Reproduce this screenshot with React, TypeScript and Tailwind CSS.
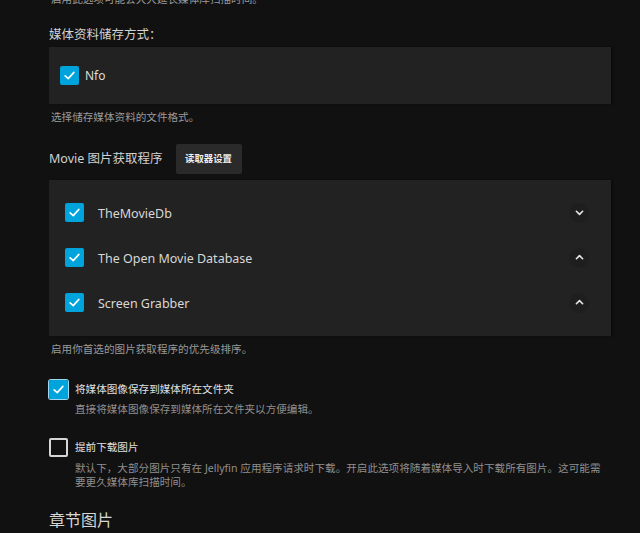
import React from 'react';

const FONT = { fontFamily: '"Noto Sans", "Noto Sans CJK SC", sans-serif' };

const PROVIDERS = [
  { name: 'TheMovieDb', dir: 'down' },
  { name: 'The Open Movie Database', dir: 'up' },
  { name: 'Screen Grabber', dir: 'up' },
];

function Check({ checked, size = 'w-[19px] h-[19px]' }: { checked: boolean; size?: string }) {
  if (!checked) {
    return <span className={`${size} shrink-0 rounded-[2px] border-2 border-[#d6d6d6]`} />;
  }
  return (
    <span className={`${size} shrink-0 rounded-[2px] bg-[#00a4dc] flex items-center justify-center`}>
      <svg viewBox="0 0 24 24" className="w-[15px] h-[15px]" fill="none" stroke="white" strokeWidth="2.6" strokeLinecap="round" strokeLinejoin="round">
        <polyline points="5,12.5 10,17 19,7" />
      </svg>
    </span>
  );
}

function Chevron({ dir }: { dir: string }) {
  return (
    <span className="w-[20px] h-[20px] rounded-full bg-black/10 flex items-center justify-center">
      <svg viewBox="0 0 24 24" className="w-[15px] h-[15px]" fill="none" stroke="#e6e6e6" strokeWidth="2.6" strokeLinecap="round" strokeLinejoin="round">
        {dir === 'down' ? <polyline points="7,10 12,15 17,10" /> : <polyline points="7,14 12,9 17,14" />}
      </svg>
    </span>
  );
}

export default function App() {
  return (
    <div style={FONT} className="w-[640px] h-[533px] overflow-hidden bg-[#111111] pl-[49px] pr-[29px]">
      {/* cut-off description of previous option */}
      <p className="mt-[-8px] pl-[2px] text-[10.6px] leading-[14px] text-[#9a9a9a]">
        启用此选项可能会大大延长媒体库扫描时间。
      </p>

      {/* metadata savers */}
      <h3 className="mt-[20px] text-[12.5px] leading-[18px] text-[#d2d2d2]">媒体资料储存方式：</h3>
      <div className="mt-[3px] h-[57px] bg-[#222222] flex items-center pl-[11px] gap-[6px] shadow-[2px_0_2px_rgba(0,0,0,0.35)]">
        <Check checked />
        <span className="text-[12px] text-[#dddddd]">Nfo</span>
      </div>
      <p className="mt-[6px] pl-[2px] text-[10.6px] leading-[14px] text-[#9a9a9a]">选择储存媒体资料的文件格式。</p>

      {/* image fetchers */}
      <div className="mt-[20px] flex items-center">
        <h3 className="text-[12.5px] leading-[18px] text-[#d2d2d2]">Movie 图片获取程序</h3>
        <button className="ml-[13px] h-[30px] w-[66px] bg-[#2a2a2a] rounded-[2px] text-[9.4px] font-bold text-[#eeeeee]">
          读取器设置
        </button>
      </div>
      <div className="mt-[6px] bg-[#222222] pt-[10px] pb-[11px] shadow-[2px_0_2px_rgba(0,0,0,0.35)]">
        {PROVIDERS.map(p => (
          <div key={p.name} className="h-[45px] flex items-center pl-[16px] pr-[22px]">
            <Check checked />
            <span className="ml-[14px] pt-[3px] text-[12.5px] text-[#d8d8d8]">{p.name}</span>
            <span className="ml-auto">
              <Chevron dir={p.dir} />
            </span>
          </div>
        ))}
      </div>
      <p className="mt-[6px] pl-[2px] text-[10.6px] leading-[14px] text-[#9a9a9a]">启用你首选的图片获取程序的优先级排序。</p>

      {/* save local */}
      <div className="mt-[24px] flex items-start gap-[7px]">
        <span className="rounded-[2px] ring-1 ring-[#9fd8ee]">
          <Check checked />
        </span>
        <div>
          <div className="text-[10.6px] leading-[19px] text-[#e0e0e0]">将媒体图像保存到媒体所在文件夹</div>
          <div className="mt-[3px] text-[10.6px] leading-[14px] text-[#8f8f8f]">直接将媒体图像保存到媒体所在文件夹以方便编辑。</div>
        </div>
      </div>

      {/* download images in advance */}
      <div className="mt-[22px] flex items-start gap-[7px]">
        <Check checked={false} />
        <div className="w-[530px]">
          <div className="text-[10.6px] leading-[19px] text-[#e0e0e0]">提前下载图片</div>
          <div className="mt-[4px] text-[10.6px] leading-[14px] text-[#8f8f8f]">
            默认下，大部分图片只有在 Jellyfin 应用程序请求时下载。开启此选项将随着媒体导入时下载所有图片。这可能需要更久媒体库扫描时间。
          </div>
        </div>
      </div>

      <h2 className="mt-[20px] text-[16px] leading-[22px] text-[#d6d6d6]">章节图片</h2>
    </div>
  );
}
